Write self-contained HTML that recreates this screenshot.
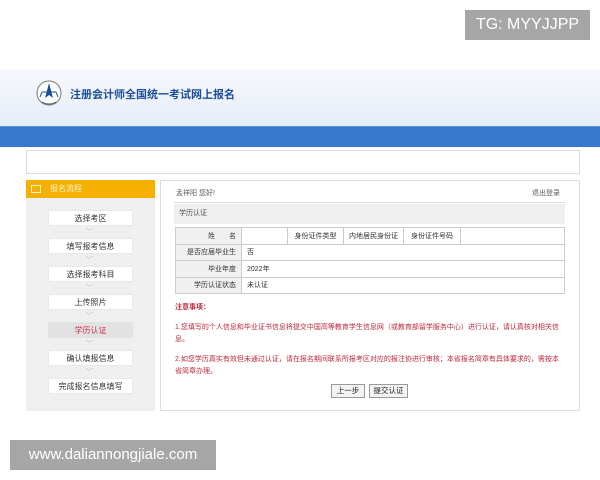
<!DOCTYPE html>
<html><head><meta charset="utf-8"><style>
*{margin:0;padding:0;box-sizing:border-box}
body{width:600px;height:480px;background:#fff;position:relative;overflow:hidden;font-family:"Liberation Sans","Noto Sans CJK SC",sans-serif;}
.a{position:absolute}
.hdr{left:0;top:69px;width:600px;height:57px;background:linear-gradient(180deg,#f6f8fc,#e6eef8)}
.title{left:70px;top:86px;font-size:11px;font-weight:bold;color:#1e4d9c}
.blue{left:0;top:126px;width:600px;height:21px;background:#3679cc;border-top:1px solid #5b8fd0}
.box{left:26px;top:150px;width:554px;height:24px;border:1px solid #ddd;background:#fff}
.side{left:26px;top:180px;width:129px;height:231px;background:#efefef}
.sh{left:26px;top:180px;width:129px;height:18px;background:#f5b000;color:#fff6d0;font-size:8px;line-height:18px;padding-left:24px}
.item{left:48px;width:85px;height:16px;background:#fff;border:1px solid #e8e8e8;font-size:8px;color:#333;text-align:center;line-height:15px}
.arr{left:86px;font-size:7px;color:#bbb}
.main{left:160px;top:180px;width:420px;height:231px;border:1px solid #ddd;background:#fff}
table{border-collapse:collapse;font-size:7px;color:#333}
td{border:1px solid #ccc;height:16.5px;padding:0 5px}
td.l{background:#f0f0f0;text-align:right}
.red{color:#c0283c;font-size:7px;line-height:12px}
.btn{top:384px;height:14px;border:1px solid #999;background:#f3f3f3;font-size:7.5px;line-height:12px;text-align:center;color:#222}
.badge{background:#a6a6a6;color:#fff;font-size:16px;text-align:center}
</style></head><body>
<div class="a badge" style="left:465px;top:10px;width:125px;height:30px;line-height:30px">TG: MYYJJPP</div>
<div class="a hdr"></div>
<svg class="a" style="left:34px;top:78px" width="32" height="32" viewBox="0 0 32 32">
<circle cx="15" cy="15" r="12" fill="#fff" stroke="#777" stroke-width="1"/>
<path d="M15 5 L11 20 L15 17 L19 20 Z" fill="#1e4d9c"/>
<path d="M8 14 L22 14 M8 14 L6 19 M22 14 L24 19" stroke="#1e4d9c" stroke-width="1" fill="none"/>
<path d="M8 24 Q15 28 22 24" stroke="#555" stroke-width="1" fill="none"/>
</svg>
<div class="a title">注册会计师全国统一考试网上报名</div>
<div class="a blue"></div>
<div class="a box"></div>
<div class="a side"></div>
<div class="a sh"><span style="position:absolute;left:5px;top:5px;width:10px;height:8px;border:1px solid #fff6d0"></span>报名流程</div>
<div class="a item" style="top:210px">选择考区</div><div class="a arr" style="top:227px">﹀</div>
<div class="a item" style="top:238px">填写报考信息</div><div class="a arr" style="top:255px">﹀</div>
<div class="a item" style="top:266px">选择报考科目</div><div class="a arr" style="top:283px">﹀</div>
<div class="a item" style="top:294px">上传照片</div><div class="a arr" style="top:311px">﹀</div>
<div class="a item" style="top:322px;background:#e2e2e2;color:#d0304a;border-color:#e2e2e2">学历认证</div><div class="a arr" style="top:339px">﹀</div>
<div class="a item" style="top:350px">确认填报信息</div><div class="a arr" style="top:367px">﹀</div>
<div class="a item" style="top:378px">完成报名信息填写</div>
<div class="a main"></div>
<div class="a" style="left:176px;top:188px;font-size:7px;color:#555">孟祥阳 您好!</div>
<div class="a" style="left:532px;top:188px;font-size:7px;color:#555">退出登录</div>
<div class="a" style="left:174px;top:202px;width:391px;height:1px;background:#ddd"></div>
<div class="a" style="left:174px;top:204px;width:391px;height:20px;background:#efefef;font-size:7px;color:#555;line-height:20px;padding-left:5px">学历认证</div>
<table class="a" style="left:175px;top:227px;width:390px">
<tr><td class="l" style="width:66px">姓　　名</td><td style="width:46px"></td><td style="width:56px;text-align:center">身份证件类型</td><td style="width:60px;text-align:center">内地居民身份证</td><td style="width:57px;text-align:center">身份证件号码</td><td></td></tr>
<tr><td class="l">是否应届毕业生</td><td colspan="5">否</td></tr>
<tr><td class="l">毕业年度</td><td colspan="5">2022年</td></tr>
<tr><td class="l">学历认证状态</td><td colspan="5">未认证</td></tr>
</table>
<div class="a red" style="left:175px;top:302px;font-weight:bold">注意事项：</div>
<div class="a red" style="left:175px;top:322px;width:390px">1.您填写的个人信息和毕业证书信息将提交中国高等教育学生信息网（或教育部留学服务中心）进行认证，请认真核对相关信息。</div>
<div class="a red" style="left:175px;top:354px;width:390px">2.如您学历真实有效但未通过认证，请在报名期间联系所报考区对应的报注协进行审核；本省报名简章有具体要求的，需按本省简章办理。</div>
<div class="a btn" style="left:331px;width:34px">上一步</div>
<div class="a btn" style="left:369px;width:39px">提交认证</div>
<div class="a badge" style="left:10px;top:440px;width:206px;height:30px;line-height:30px;font-size:15px">www.daliannongjiale.com</div>
</body></html>
